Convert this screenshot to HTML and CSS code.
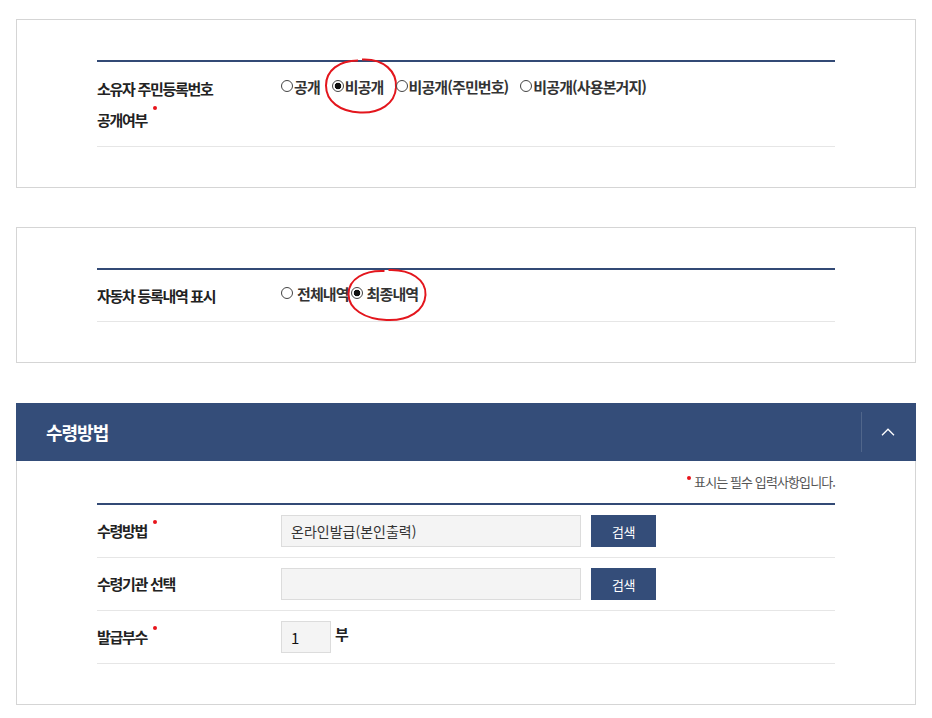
FILE: index.html
```html
<!DOCTYPE html>
<html lang="ko">
<head>
  <meta charset="UTF-8" />
  <meta name="viewport" content="width=device-width, initial-scale=1.0">
  <title>신청 옵션</title>
  <link rel="stylesheet" href="styles.css">
</head>
<body>
  <div class="box box-first">
    <div class="table">
      <div class="row row-tall">
        <div class="label">소유자 주민등록번호<br>공개여부<span class="req"></span></div>
        <div class="options">
          <label class="opt"><input type="radio" name="owner">공개</label>
          <label class="opt marked"><input type="radio" name="owner" checked>비공개
            <svg class="circle-mark" width="78" height="61" viewBox="0 0 78 61"><path d="M40 4 C62 3 75 16 74 32 C73 48 58 58 38 57 C18 56 4 46 4 30 C4 15 17 5 36 5" fill="none" stroke="#e3161d" stroke-width="2"/></svg>
          </label>
          <label class="opt"><input type="radio" name="owner">비공개(주민번호)</label>
          <label class="opt"><input type="radio" name="owner">비공개(사용본거지)</label>
        </div>
      </div>
    </div>
  </div>

  <div class="box">
    <div class="table">
      <div class="row">
        <div class="label">자동차 등록내역 표시</div>
        <div class="options options-loose">
          <label class="opt"><input type="radio" name="history">전체내역</label>
          <label class="opt marked"><input type="radio" name="history" checked>최종내역
            <svg class="circle-mark mark-wide" width="85" height="58" viewBox="0 0 85 58"><path d="M44 4 C66 3 82 14 81 29 C80 45 64 55 42 54 C20 53 4 43 4 28 C4 13 20 4 40 5" fill="none" stroke="#e3161d" stroke-width="2"/></svg>
          </label>
        </div>
      </div>
    </div>
  </div>

  <div class="section">
    <div class="section-head">
      <h2>수령방법</h2>
      <button class="toggle" type="button" aria-label="접기">
        <svg width="14" height="8" viewBox="0 0 14 8"><polyline points="1,7.2 7,1.2 13,7.2" fill="none" stroke="#fff" stroke-width="1.3"/></svg>
      </button>
    </div>
    <div class="section-body">
      <p class="notice"><span class="req req-note"></span> 표시는 필수 입력사항입니다.</p>
      <div class="table">
        <div class="row row-form">
          <div class="label">수령방법<span class="req"></span></div>
          <div class="field">
            <input class="text-input" type="text" value="온라인발급(본인출력)" readonly>
            <button class="search-btn" type="button">검색</button>
          </div>
        </div>
        <div class="row row-form">
          <div class="label">수령기관 선택</div>
          <div class="field">
            <input class="text-input" type="text" value="" readonly>
            <button class="search-btn" type="button">검색</button>
          </div>
        </div>
        <div class="row row-form">
          <div class="label">발급부수<span class="req"></span></div>
          <div class="field">
            <input class="text-input count-input" type="text" value="1">
            <span class="unit">부</span>
          </div>
        </div>
      </div>
    </div>
  </div>
</body>
</html>
```

FILE: styles.css
```css
body {
  margin: 0;
  padding: 19px 16px;
  font-family: "Noto Sans CJK KR", "Noto Sans", sans-serif;
  color: #222;
  background: #fff;
}

.box {
  border: 1px solid #d5d5d5;
  padding: 40px 80px;
  margin-bottom: 40px;
}

.box-first {
  margin-bottom: 39px;
}

.table {
  border-top: 2px solid #334a75;
}

.row {
  display: grid;
  grid-template-columns: 184px 1fr;
  border-bottom: 1px solid #e6e6e6;
  padding: 10px 0;
}

.row-tall {
  padding: 11px 0;
}

.label {
  font-size: 15px;
  font-weight: bold;
  letter-spacing: -1.3px;
  line-height: 31px;
  color: #222;
}

.req {
  display: inline-block;
  width: 4px;
  height: 4px;
  border-radius: 50%;
  background: #e8141b;
  margin-left: 6px;
  vertical-align: 16px;
}

.options {
  display: flex;
  align-items: center;
  gap: 12px;
  height: 26px;
  font-size: 15px;
  font-weight: bold;
  letter-spacing: -0.9px;
  color: #333;
}

.opt {
  display: flex;
  align-items: center;
  gap: 1px;
  white-space: nowrap;
  position: relative;
}

.options-loose {
  gap: 2px;
}

.options-loose .opt {
  gap: 4px;
}

.opt input {
  appearance: none;
  -webkit-appearance: none;
  width: 12px;
  height: 12px;
  margin: 0;
  border: 1px solid #444;
  border-radius: 50%;
  background: #fff;
}

.opt input:checked {
  background: radial-gradient(circle, #111 0 3px, #fff 3.6px);
}

.circle-mark {
  position: absolute;
  left: calc(50% + 3px);
  top: 50%;
  transform: translate(-50%, -50%);
  pointer-events: none;
}

.mark-wide {
  left: calc(50% + 3px);
  top: calc(50% + 2px);
}

.section-head {
  height: 58px;
  background: #344d79;
  display: flex;
  align-items: center;
  justify-content: space-between;
  padding-left: 30px;
}

.section-head h2 {
  margin: 0;
  color: #fff;
  font-size: 18px;
  letter-spacing: -1px;
  font-weight: bold;
}

.toggle {
  width: 55px;
  height: 40px;
  border: none;
  border-left: 1px solid rgba(255, 255, 255, 0.14);
  background: transparent;
  display: flex;
  align-items: center;
  justify-content: center;
  padding: 0 3px 0 0;
  cursor: pointer;
}

.section-body {
  border: 1px solid #d5d5d5;
  border-top: none;
  padding: 11px 80px 40px;
}

.notice {
  margin: 0 0 11px;
  text-align: right;
  font-size: 13px;
  line-height: 20px;
  letter-spacing: -0.9px;
  color: #555;
}

.req-note {
  vertical-align: 7px;
  margin: 0;
}

.row-form .label {
  line-height: 32px;
}

.row-form .req {
  vertical-align: 13px;
}

.field {
  display: flex;
  align-items: center;
}

.text-input {
  width: 300px;
  height: 32px;
  box-sizing: border-box;
  border: 1px solid #dcdcdc;
  background: #f4f4f4;
  padding: 0 9px;
  font-family: "Noto Sans CJK KR", "Noto Sans", sans-serif;
  font-size: 14px;
  color: #333;
}

.count-input {
  width: 50px;
  font-size: 15px;
  color: #111;
}

.search-btn {
  margin-left: 10px;
  width: 65px;
  height: 32px;
  border: none;
  background: #344d79;
  color: #fff;
  font-family: "Noto Sans CJK KR", "Noto Sans", sans-serif;
  font-size: 13px;
  letter-spacing: -0.5px;
  cursor: pointer;
}

.unit {
  margin-left: 4px;
  font-size: 15px;
  font-weight: bold;
  align-self: flex-start;
  line-height: 26px;
}
```
